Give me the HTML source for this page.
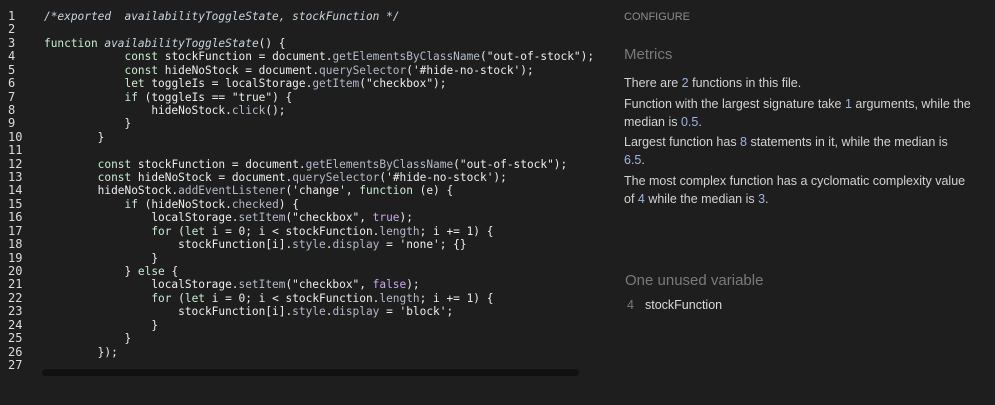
<!DOCTYPE html>
<html><head><style>
body{margin:0;width:995px;height:405px;background:#1e1e1e;overflow:hidden;position:relative;font-family:"Liberation Sans",sans-serif}
.code{position:absolute;left:0;top:10px;font-family:"DejaVu Sans Mono",monospace;font-size:11.15px;line-height:13.42px;color:#ececec;white-space:pre}
.ln{position:absolute;left:8px;width:14px;text-align:left;color:#dcdcdc;font-size:12px}
.src{position:absolute;left:44px}
.k{color:#c8ead2}.p{color:#b4b8c8}.c{color:#c9d4dc;font-style:italic}.b{color:#c8a8e8}
.sb{position:absolute;left:42px;top:369px;width:537px;height:7px;border-radius:4px;background:#111}
.r{position:absolute;left:624px;color:#d2d2d2;font-size:12.5px;white-space:nowrap}
.n{color:#9fb4e0}
</style></head><body>
<div class="code"><div class="ln">1
2
3
4
5
6
7
8
9
10
11
12
13
14
15
16
17
18
19
20
21
22
23
24
25
26
27</div><div class="src"><span class="c">/*exported  availabilityToggleState, stockFunction */</span>

<span class="k">function</span> <span class="c" style="font-style:italic">availabilityToggleState</span>() {
            <span class="k">const</span> stockFunction = document.<span class="p">getElementsByClassName</span>("out-of-stock");
            <span class="k">const</span> hideNoStock = document.<span class="p">querySelector</span>('#hide-no-stock');
            <span class="k">let</span> toggleIs = localStorage.<span class="p">getItem</span>("checkbox");
            <span class="k">if</span> (toggleIs == "true") {
                hideNoStock.<span class="p">click</span>();
            }
        }

        <span class="k">const</span> stockFunction = document.<span class="p">getElementsByClassName</span>("out-of-stock");
        <span class="k">const</span> hideNoStock = document.<span class="p">querySelector</span>('#hide-no-stock');
        hideNoStock.<span class="p">addEventListener</span>('change', <span class="k">function</span> (e) {
            <span class="k">if</span> (hideNoStock.<span class="p">checked</span>) {
                localStorage.<span class="p">setItem</span>("checkbox", <span class="b">true</span>);
                <span class="k">for</span> (<span class="k">let</span> i = 0; i &lt; stockFunction.<span class="p">length</span>; i += 1) {
                    stockFunction[i].<span class="p">style</span>.<span class="p">display</span> = 'none'; {}
                }
            } <span class="k">else</span> {
                localStorage.<span class="p">setItem</span>("checkbox", <span class="b">false</span>);
                <span class="k">for</span> (<span class="k">let</span> i = 0; i &lt; stockFunction.<span class="p">length</span>; i += 1) {
                    stockFunction[i].<span class="p">style</span>.<span class="p">display</span> = 'block';
                }
            }
        });
</div></div>
<div class="sb"></div>
<div class="r" style="top:11px;font-size:11px;color:#8a8a8a">CONFIGURE</div>
<div class="r" style="top:46px;font-size:15px;color:#7a7a7a">Metrics</div>
<div class="r" style="top:74px;line-height:18px">There are <span class="n">2</span> functions in this file.</div>
<div class="r" style="top:95px;line-height:18px">Function with the largest signature take <span class="n">1</span> arguments, while the<br>median is <span class="n">0.5</span>.</div>
<div class="r" style="top:133px;line-height:18px">Largest function has <span class="n">8</span> statements in it, while the median is<br><span class="n">6.5</span>.</div>
<div class="r" style="top:172px;line-height:18px">The most complex function has a cyclomatic complexity value<br>of <span class="n">4</span> while the median is <span class="n">3</span>.</div>
<div class="r" style="top:272px;font-size:15px;color:#7a7a7a;left:625px">One unused variable</div>
<div class="r" style="top:298px;left:627px;color:#7a7a7a">4</div>
<div class="r" style="top:298px;left:645px;color:#dadada">stockFunction</div>
</body></html>
